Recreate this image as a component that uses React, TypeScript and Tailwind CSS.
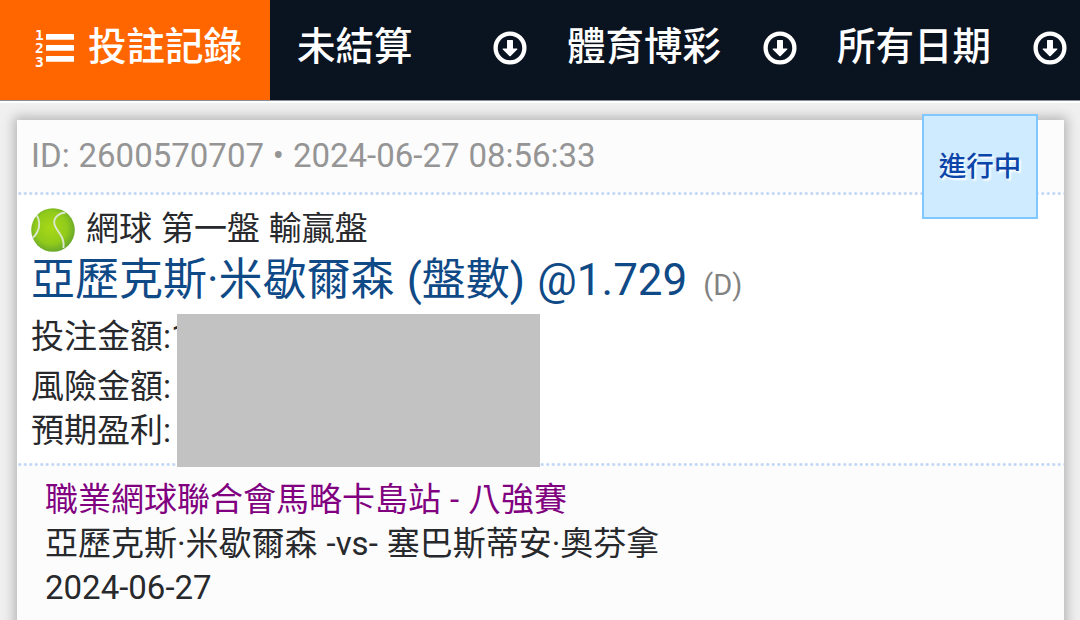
type Filter = {
  label: string;
};

type Amount = {
  label: string;
  value?: string;
};

const filters: Filter[] = [
  { label: "未結算" },
  { label: "體育博彩" },
  { label: "所有日期" },
];

const amounts: Amount[] = [
  { label: "投注金額:", value: "1" },
  { label: "風險金額:" },
  { label: "預期盈利:" },
];

const ListIcon = () => (
  <svg
    className="mt-[2px] h-10 w-10 shrink-0 overflow-visible"
    viewBox="0 0 40 40"
    fill="currentColor"
  >
    <g className="font-['DejaVu_Sans_Mono',monospace] text-[14.5px] font-bold">
      <text x="0" y="11.5">1</text>
      <text x="0" y="25">2</text>
      <text x="0" y="38.5">3</text>
    </g>
    <rect x="11" y="6" width="28" height="5.8" rx="0.6" />
    <rect x="11" y="17" width="28" height="5.8" rx="0.6" />
    <rect x="11" y="28" width="28" height="5.8" rx="0.6" />
  </svg>
);

const ArrowCircleIcon = () => (
  <svg className="mt-[2px] h-[34px] w-[34px] shrink-0" viewBox="0 0 34 34" fill="none">
    <circle cx="17" cy="17" r="14.4" stroke="currentColor" strokeWidth="4.3" />
    <path
      d="M14.6 9h4.8q.6 0 .6.6v7.8h3.8q1.1.1.4 1l-6.5 6.6q-.7.6-1.4 0l-6.5-6.6q-.7-.9.4-1H14V9.6q0-.6.6-.6z"
      fill="currentColor"
    />
  </svg>
);

const TennisBallIcon = () => (
  <svg className="h-11 w-11 shrink-0" viewBox="0 0 44 44">
    <defs>
      <radialGradient id="ball" cx="0.46" cy="0.45" r="0.56">
        <stop offset="0" stopColor="#a8d916" />
        <stop offset="0.65" stopColor="#91ca1b" />
        <stop offset="1" stopColor="#68a72b" />
      </radialGradient>
      <clipPath id="ball-clip">
        <circle cx="22" cy="22" r="21.8" />
      </clipPath>
    </defs>
    <circle cx="22" cy="22" r="21.8" fill="url(#ball)" />
    <g clipPath="url(#ball-clip)" fill="none" stroke="#dbe8cf" strokeWidth="1.9">
      <path d="M5 6C9 12 9 19 6 24.5C4.5 27.5 3 29 1 30.5" />
      <path d="M34.5 4.5C26 5.5 22 11 23.5 16.5C25.5 24 34 27.5 32.5 40" />
    </g>
  </svg>
);

const DottedLine = () => (
  <div className="h-[3px] bg-[radial-gradient(circle_at_center,#bfd5f3_0,#bfd5f3_1px,transparent_2px)] bg-[length:5.5px_3px] bg-repeat-x" />
);

const NavBar = () => (
  <nav className="flex h-[100px] bg-[#0a1320] text-[38.5px] font-medium text-white">
    <div className="flex w-[270px] items-center bg-[#ff6600] pb-[6px] pl-[35px]">
      <ListIcon />
      <span className="ml-[13px]">投註記錄</span>
    </div>
    {filters.map((filter) => (
      <div
        key={filter.label}
        className="flex w-[270px] items-center justify-between pr-[13px] pb-[6px] pl-[27px]"
      >
        <span>{filter.label}</span>
        <ArrowCircleIcon />
      </div>
    ))}
  </nav>
);

const BetCard = () => (
  <article className="relative mx-4 mt-[17px] ml-[17px] h-[540px] bg-white text-[33px] leading-[44px] text-[#27292c] shadow-[0_0_11px_3px_rgba(0,0,0,0.25)] [word-spacing:0.7px]">
    <header className="bg-[#fcfcfc] px-[14px] leading-[72px] text-[#959595]">
      ID: 2600570707 • 2024-06-27 08:56:33
    </header>
    <DottedLine />

    <div className="absolute -top-[6px] right-[26px] flex h-[105px] w-[116px] items-center justify-center border-2 border-[#7fc8fd] bg-[#cfebff] text-[27.5px] font-medium text-[#0c45aa] [text-shadow:2px_2px_2px_white]">
      進行中
    </div>

    <section className="relative h-[268px] px-[14px] pt-[9px]">
      <div className="flex h-12 items-start gap-[11px]">
        <div className="pt-1">
          <TennisBallIcon />
        </div>
        <span className="pt-[3px]">網球 第一盤 輸贏盤</span>
      </div>
      <div className="flex items-baseline pt-[2px] text-[44px] leading-[52px] text-[#0f4a87] [word-spacing:1.3px]">
        <span>亞歷克斯·米歇爾森 (盤數) @1.729</span>
        <span className="ml-4 text-[29px] text-[#828282]">(D)</span>
      </div>
      <dl className="pt-1">
        {amounts.map((amount) => (
          <div key={amount.label} className="flex first:mb-[6px]">
            <dt>{amount.label}</dt>
            {amount.value && <dd>{amount.value}</dd>}
          </div>
        ))}
      </dl>
      {/* covers the amounts */}
      <div className="absolute top-[119px] left-40 z-10 h-[153px] w-[363px] bg-[#c2c2c2]" />
    </section>
    <DottedLine />

    <footer className="h-[154px] bg-[#fcfcfc] px-7 pt-3">
      <p className="text-[#800080]">職業網球聯合會馬略卡島站 - 八強賽</p>
      <p>亞歷克斯·米歇爾森 -vs- 塞巴斯蒂安·奧芬拿</p>
      <p>2024-06-27</p>
    </footer>
  </article>
);

export default function App() {
  return (
    <div
      lang="zh-Hant"
      className="h-[620px] w-[1080px] overflow-hidden bg-[#f0f0f0] font-[Roboto,'Noto_Sans_CJK_TC',sans-serif]"
    >
      <NavBar />
      <div className="relative z-10 h-[3px] border-t border-[#8a8f96] bg-white" />
      <BetCard />
    </div>
  );
}
